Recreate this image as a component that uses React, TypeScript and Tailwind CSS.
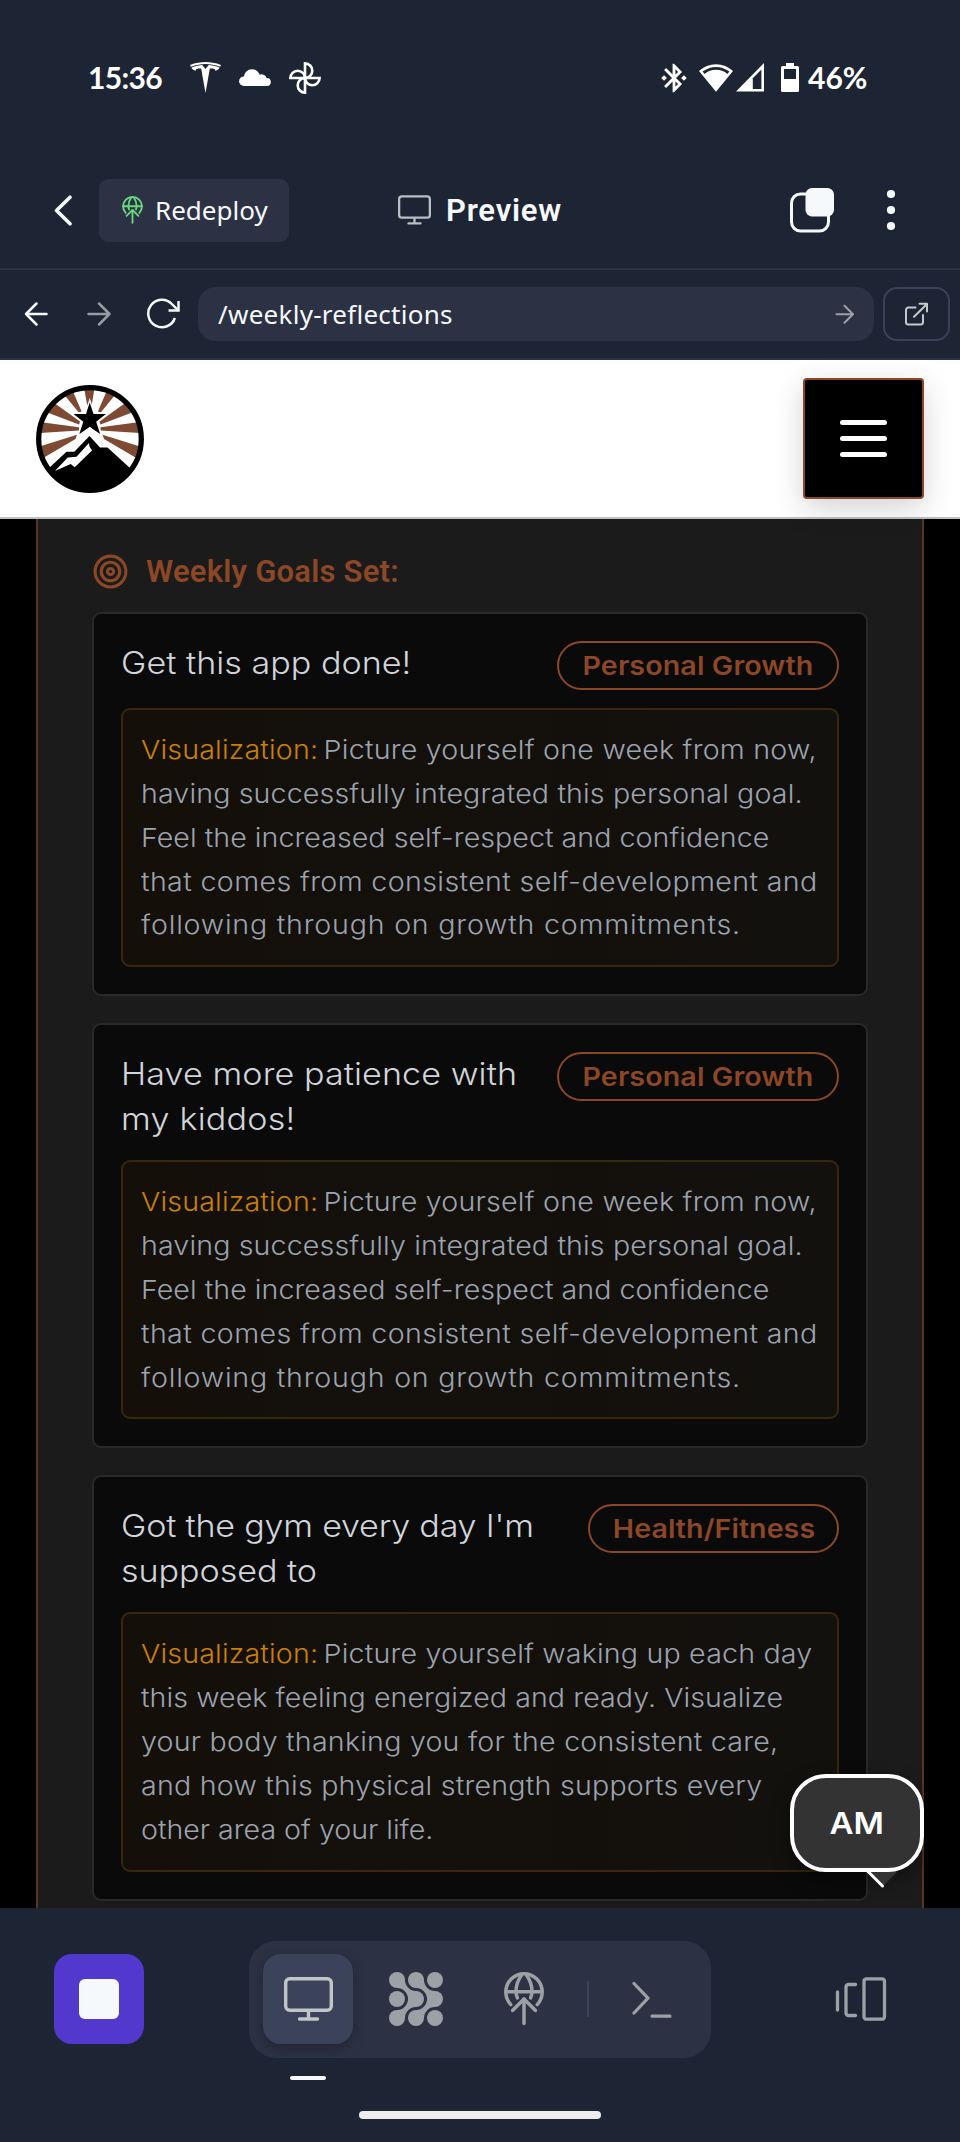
import React from "react";
import { Target } from "lucide-react";
import { SiTesla } from "react-icons/si";
import { MdBluetoothConnected } from "react-icons/md";

type Line = { text: string; tracking: string };
type Goal = {
  title: Line[];
  category: string;
  pill: string;
  lines: Line[];
};

const personalVision: Line[] = [
  { text: "Picture yourself one week from now,", tracking: "tracking-[0.2px]" },
  { text: "having successfully integrated this personal goal.", tracking: "tracking-[0.12px]" },
  { text: "Feel the increased self-respect and confidence", tracking: "tracking-[0.03px]" },
  { text: "that comes from consistent self-development and", tracking: "tracking-[0.33px]" },
  { text: "following through on growth commitments.", tracking: "tracking-[0.71px]" },
];

const goals: Goal[] = [
  {
    title: [{ text: "Get this app done!", tracking: "tracking-[0.02px]" }],
    category: "Personal Growth",
    pill: "w-[282px] tracking-[0.11px]",
    lines: personalVision,
  },
  {
    title: [
      { text: "Have more patience with", tracking: "tracking-[0.08px]" },
      { text: "my kiddos!", tracking: "tracking-[0.2px]" },
    ],
    category: "Personal Growth",
    pill: "w-[282px] tracking-[0.11px]",
    lines: personalVision,
  },
  {
    title: [
      { text: "Got the gym every day I'm", tracking: "tracking-[-0.2px]" },
      { text: "supposed to", tracking: "tracking-[-0.05px]" },
    ],
    category: "Health/Fitness",
    pill: "w-[251px] tracking-[0.05px]",
    lines: [
      { text: "Picture yourself waking up each day", tracking: "tracking-[0.16px]" },
      { text: "this week feeling energized and ready. Visualize", tracking: "tracking-[0.06px]" },
      { text: "your body thanking you for the consistent care,", tracking: "tracking-[0.2px]" },
      { text: "and how this physical strength supports every", tracking: "tracking-[0.2px]" },
      { text: "other area of your life.", tracking: "tracking-[-0.02px]" },
    ],
  },
];

const stroke = {
  fill: "none",
  stroke: "currentColor",
  strokeLinecap: "round" as const,
  strokeLinejoin: "round" as const,
};

function CloudIcon() {
  return (
    <svg width="32" height="17" viewBox="0 0 32 17" fill="currentColor">
      <circle cx="4.9" cy="12.2" r="4.8" />
      <circle cx="13" cy="8.5" r="8.3" />
      <circle cx="22.5" cy="10.5" r="5.3" />
      <circle cx="27.8" cy="13" r="4" />
      <path d="M5 9h18l5 4v4H5z" />
    </svg>
  );
}

function PinwheelIcon() {
  return (
    <svg width="32" height="32" viewBox="0 0 32 32" {...stroke} strokeWidth="2.6" strokeLinejoin="miter">
      <path d="M16 16V1.4A7.3 7.3 0 0 1 16 16" />
      <path d="M16 16H30.6A7.3 7.3 0 0 1 16 16" />
      <path d="M16 16V30.6A7.3 7.3 0 0 1 16 16" />
      <path d="M16 16H1.4A7.3 7.3 0 0 1 16 16" />
    </svg>
  );
}

function WifiIcon() {
  return (
    <svg width="34" height="29" viewBox="0 0 34 29">
      <path d="M0 8A24.5 24.5 0 0 1 34 8L17 28.7Z" fill="#fff" />
      <path d="M3.6 8.6A21.5 21.5 0 0 1 30.4 8.6L28.4 11A17.6 17.6 0 0 0 5.6 11Z" fill="#1d2433" />
    </svg>
  );
}

function SignalIcon() {
  return (
    <svg width="28" height="29" viewBox="0 0 28 29">
      <path d="M28 0V28.5H0Z" fill="#fff" />
      <path d="M16.8 15.2L25.4 6.5V26H16.8Z" fill="#1d2433" />
    </svg>
  );
}

function BatteryIcon() {
  return (
    <svg width="18" height="29" viewBox="0 0 18 29">
      <path d="M5 0h8v3h3.5a1.5 1.5 0 0 1 1.5 1.5V27.5a1.5 1.5 0 0 1-1.5 1.5h-15A1.5 1.5 0 0 1 0 27.5V4.5A1.5 1.5 0 0 1 1.5 3H5z" fill="#fff" />
      <path d="M3 6h12v10H3z" fill="#1d2433" />
    </svg>
  );
}

function DeployIcon({ className, strokeWidth }: { className: string; strokeWidth: number }) {
  return (
    <svg className={className} viewBox="0 0 40 54" {...stroke} strokeWidth={strokeWidth}>
      <path d="M6.8 32.6A18.2 18.2 0 1 1 33.2 32.6" />
      <path d="M2 19.8H38" />
      <path d="M17.5 3Q12 11 12 19.5Q12 23 13.4 26" />
      <path d="M22.5 3Q28 11 28 19.5Q28 23 26.6 26" />
      <path d="M8.5 38.5L20 27L31.5 38.5" />
      <path d="M20 27V51.5" />
    </svg>
  );
}

function MonitorIcon({ className }: { className: string }) {
  return (
    <svg className={className} viewBox="0 0 49 44" {...stroke} strokeWidth="3.4">
      <rect x="1.7" y="1.7" width="45.6" height="31.6" rx="4" />
      <path d="M24.5 34V41M15.5 42H33.5" />
    </svg>
  );
}

function DotsIcon() {
  return (
    <svg width="54" height="54" viewBox="-8 -8 54 54" fill="currentColor">
      {[0, 19, 38].map((y) => [0, 19, 38].map((x) => <circle key={`${x}-${y}`} cx={x} cy={y} r="8" />))}
      {[0, 19].map((x) => (
        <g key={x} transform={`translate(${x} 0)`}>
          <path d="M8 0A11 11 0 0 0 19 11L11 19A11 11 0 0 0 0 8Z" />
          <path d="M8 38A11 11 0 0 1 19 27L11 19A11 11 0 0 1 0 30Z" />
        </g>
      ))}
    </svg>
  );
}

function LogoIcon() {
  const rays = (
    <>
      <path d="M28 9.5L36.8 6L45.6 26.5L42.8 27.5Z" />
      <path d="M12 27.8L19 18.5L44 36.5L43 39.5Z" />
      <path d="M4 48L5.5 37.3L43 42.3V45.5Z" />
      <path d="M8 72.5L3.5 61.5L41 49.7L39.5 54Z" />
    </>
  );
  return (
    <svg width="108" height="108" viewBox="0 0 108 108">
      <circle cx="54" cy="54" r="51" fill="#fff" />
      <g fill="#7e4a33">
        <path d="M48 3H58.5L55.8 20H51.2Z" />
        {rays}
        <g transform="translate(107.5 0) scale(-1 1)">{rays}</g>
      </g>
      <path
        d="M53.7 17.5L57.5 29H70L60.2 36.8L64.2 49L53.7 42L43.3 49L47.3 36.8L37.5 29H50Z"
        fill="#000"
        stroke="#fff"
        strokeWidth="2.8"
        paintOrder="stroke"
      />
      <path d="M53.7 41.8L68 55L94 78L90 90H18L14 80Z" fill="#fff" />
      <path
        d="M53.5 51L64 62.5H71.5L95 84A50.8 50.8 0 0 1 12 84L30.5 66.7H38.3Z"
        fill="#000"
      />
      <path d="M53 58L53.5 61.5L56 65.5L38.7 82.3L34.7 79L19 86L31.7 72.5L40.5 71.7Z" fill="#fff" />
      <circle cx="54" cy="54" r="51.3" fill="none" stroke="#000" strokeWidth="5.3" />
    </svg>
  );
}

function StatusBar() {
  return (
    <div className="flex h-[153px] shrink-0 items-start justify-between pl-[88px] pr-[89px] pt-[60px] text-white">
      <div className="flex h-[35px] items-center">
        <span className="w-[102px] font-['Lato'] text-[30px] font-bold leading-[35px] tracking-[-0.7px]">15:36</span>
        <SiTesla className="h-[31px] w-[31px]" />
        <span className="ml-[18px]"><CloudIcon /></span>
        <span className="ml-[18px]"><PinwheelIcon /></span>
      </div>
      <div className="flex h-[35px] items-center">
        <MdBluetoothConnected className="mr-2 h-[34px] w-[34px]" />
        <WifiIcon />
        <span className="ml-[3px]"><SignalIcon /></span>
        <span className="ml-[17px]"><BatteryIcon /></span>
        <span className="ml-[9px] w-[63px] whitespace-nowrap font-['Lato'] text-[30px] font-bold leading-[35px]">46%</span>
      </div>
    </div>
  );
}

function TitleBar() {
  return (
    <div className="flex h-[117px] shrink-0 items-center border-b-2 border-[#2c3144] pb-[1px] text-[#f5f9fc]">
      <svg className="ml-[54px] h-[31px] w-[18px]" viewBox="0 0 18 31" {...stroke} strokeWidth="3.6">
        <path d="M16 2.2L2.5 15.5L16 28.8" />
      </svg>
      <button className="ml-[27px] flex h-[63px] w-[190px] items-center rounded-[9px] bg-[#2c3144] pl-[23px]">
        <DeployIcon className="h-[28px] w-[21px] text-[#69d77f]" strokeWidth={3.6} />
        <span className="ml-[12px] font-['Noto_Sans'] text-[26px] leading-[36px]">Redeploy</span>
      </button>
      <MonitorIcon className="ml-[109px] h-[30px] w-[33px] text-[#b9bfc4]" />
      <span className="ml-[15px] w-[130px] pt-[2px] font-['Roboto'] text-[31px] font-semibold leading-[36px] tracking-[0.8px]">Preview</span>
      <svg className="ml-[214px] h-[46px] w-[46px]" viewBox="0 0 46 46">
        <rect x="1.5" y="7" width="37" height="37" rx="9" {...stroke} strokeWidth="3" />
        <rect x="15.5" y="1" width="28.5" height="28.5" rx="6.5" fill="currentColor" />
      </svg>
      <svg className="ml-[50px] h-[42px] w-[10px]" viewBox="0 0 10 42" fill="currentColor">
        <circle cx="5" cy="5" r="4.1" />
        <circle cx="5" cy="21" r="4.1" />
        <circle cx="5" cy="37" r="4.1" />
      </svg>
    </div>
  );
}

function AddressBar() {
  return (
    <div className="flex h-[90px] shrink-0 items-center border-b-2 border-[#2c3144] pr-[10px] text-[#f5f9fc]">
      <svg className="ml-[24px] h-[26px] w-[24px]" viewBox="0 0 24 26" {...stroke} strokeWidth="2.5">
        <path d="M22.5 13H2M12.5 2.5L2 13L12.5 23.5" />
      </svg>
      <svg className="ml-[39px] h-[26px] w-[24px] text-[#979ca2]" viewBox="0 0 24 26" {...stroke} strokeWidth="2.5">
        <path d="M1.5 13H22.5M12 2.5L22.5 13L12 23.5" />
      </svg>
      <svg className="ml-[35px] h-[32px] w-[34px]" viewBox="0 0 34 32" {...stroke} strokeWidth="2.5" strokeLinecap="butt">
        <path d="M28.9 20A13.7 13.7 0 1 1 25.8 6L32 12.2" />
        <path d="M32.5 3V12.5H22.5" strokeLinejoin="miter" />
      </svg>
      <div className="ml-[18px] flex h-[54px] w-[676px] items-center justify-between rounded-[18px] bg-[#2c3144] pl-5 pr-5">
        <span className="font-['Noto_Sans'] text-[26px] leading-[36px] tracking-[0.27px]">/weekly-reflections</span>
        <svg className="h-[20px] w-[19px] text-[#9ca1a6]" viewBox="0 0 19 20" {...stroke} strokeWidth="2">
          <path d="M1.5 10.2H18M9.5 1.7L18 10.2L9.5 18.7" />
        </svg>
      </div>
      <button className="ml-[9px] flex h-[54px] w-[67px] items-center justify-center rounded-[14px] border-2 border-[#3a4159] pr-[2px]">
        <svg className="h-[24px] w-[24px] text-[#c4c9cc]" viewBox="0 0 24 24" {...stroke} strokeWidth="2">
          <path d="M11.5 5.5H4.5A2.5 2.5 0 0 0 2 8V20A2.5 2.5 0 0 0 4.5 22.5H16.5A2.5 2.5 0 0 0 19 20V13" />
          <path d="M10 14.7L23 2M15.5 1.7H23V9.5" />
        </svg>
      </button>
    </div>
  );
}

function SiteHeader() {
  return (
    <div className="z-10 flex h-[159px] shrink-0 items-start justify-between border-b-2 border-[#bfc1c0] bg-white px-[36px]">
      <div className="pt-[25px]"><LogoIcon /></div>
      <button className="mt-[18px] flex h-[121px] w-[121px] flex-col items-center justify-center gap-[10.5px] rounded-[4px] border-2 border-[#8b4726] bg-black shadow-[0_9px_30px_rgba(0,0,0,0.18)]">
        <span className="h-[5.5px] w-[47.5px] rounded-full bg-white" />
        <span className="h-[5.5px] w-[47.5px] rounded-full bg-white" />
        <span className="h-[5.5px] w-[47.5px] rounded-full bg-white" />
      </button>
    </div>
  );
}

function GoalCard({ goal }: { goal: Goal }) {
  return (
    <article className="rounded-[9px] border-2 border-[#292929] bg-[#0a0a0a] p-[27px]">
      <div className="flex items-start justify-between">
        <h3 className="-mt-px mb-px w-0 text-[31px] font-light leading-[45px] text-[#d1d5db]">
          {goal.title.map((l) => (
            <span key={l.text} className={`block w-max origin-left scale-x-110 whitespace-nowrap ${l.tracking}`}>{l.text}</span>
          ))}
        </h3>
        <span
          className={`flex h-[49px] shrink-0 items-center justify-center whitespace-nowrap rounded-full border-2 border-[#8b4726] text-[26px] font-semibold text-[#8b4726] ${goal.pill}`}
        >
          <span className="scale-x-110">{goal.category}</span>
        </span>
      </div>
      <div className="mt-[18px] rounded-[9px] border-2 border-[#38270d] bg-linear-to-r from-[#140f09] to-[#13110e] p-[18px]">
        <p className="text-[26px] font-light leading-[43.85px] text-[#9ca3af]">
          {goal.lines.map((l, i) => (
            <span key={l.text} className="flex w-max origin-left scale-x-110 whitespace-nowrap">
              {i === 0 && <span className="w-[166px] tracking-[0.15px] text-[#ca8100]">Visualization: </span>}
              <span className={l.tracking}>{l.text}</span>
            </span>
          ))}
        </p>
      </div>
    </article>
  );
}

function BottomBar() {
  return (
    <nav className="flex h-[234px] shrink-0 flex-col items-center bg-[#1d2433] pt-[33px]">
      <div className="flex h-[117px] w-full items-start pl-[54px] pr-[72px]">
        <button className="mt-[13px] flex h-[90px] w-[90px] items-center justify-center rounded-[18px] bg-[#5238cc]">
          <span className="h-[40px] w-[40px] rounded-[6px] bg-[#f5f9fc]" />
        </button>
        <div className="ml-[105px] flex h-[117px] w-[462px] items-start rounded-[27px] bg-[#2c3144] pl-[14px] pt-[13px] text-[#9ca1a6]">
          <div className="flex h-[90px] w-[90px] items-center justify-center rounded-[18px] bg-[#3b435a] shadow-[0_4px_14px_rgba(0,0,0,0.25)]">
            <MonitorIcon className="h-[44px] w-[49px] text-[#c0c5c8]" />
          </div>
          <div className="flex h-[90px] items-center">
            <span className="ml-9"><DotsIcon /></span>
            <DeployIcon className="ml-[61px] h-[54px] w-[40px]" strokeWidth={3.5} />
            <span className="ml-[43px] h-[36px] w-[2px] bg-[#3b435a]" />
            <svg className="ml-[43px] h-[38px] w-[41px]" viewBox="0 0 41 38" {...stroke} strokeWidth="3.2">
              <path d="M2 3.5L16 18.2L2 33M20 36.2H38" />
            </svg>
          </div>
        </div>
        <svg className="ml-[124px] mt-[36px] h-[44px] w-[52px] text-[#9ca1a6]" viewBox="0 0 52 44" {...stroke} strokeWidth="3.3">
          <rect x="29" y="1.8" width="20.5" height="40.4" rx="2.5" />
          <path d="M20.5 7.5H13.5A2.5 2.5 0 0 0 11 10V36A2.5 2.5 0 0 0 13.5 38.5H20.5" />
          <path d="M2.5 15V33" />
        </svg>
      </div>
      <div className="mt-[18px] flex w-full pl-[290px]">
        <span className="h-[4px] w-[36px] rounded-full bg-[#f5f9fc]" />
      </div>
      <div className="mt-[31px] h-[8px] w-[242px] rounded-full bg-[#ededee]" />
    </nav>
  );
}

export default function App() {
  return (
    <div className="flex h-[2142px] w-[960px] flex-col overflow-hidden bg-[#1d2433] font-['Inter',sans-serif]">
      <StatusBar />
      <TitleBar />
      <AddressBar />
      <SiteHeader />
      <main className="relative h-[1389px] shrink-0 overflow-hidden bg-black px-[36px]">
        <section className="h-[1500px] border-x-2 border-[#5a3422] bg-[#1b1b1b] px-[54px]">
          <h2 className="flex h-[93px] items-center pt-[11px] font-['Roboto'] text-[31px] font-semibold tracking-[0.22px] text-[#8b4726]">
            <Target size={37} strokeWidth={2} />
            <span className="ml-[17px] pt-[2px]">Weekly Goals Set:</span>
          </h2>
          <div className="flex flex-col gap-[27px]">
            {goals.map((goal) => (
              <GoalCard key={goal.title[0].text} goal={goal} />
            ))}
          </div>
        </section>
        <div className="absolute right-[36px] top-[1255px] flex h-[98px] w-[134px] items-center justify-center rounded-[36px] border-4 border-white bg-[#333] pt-px text-[30px] font-semibold text-white shadow-[0_8px_20px_rgba(0,0,0,0.4)]">
          <span className="scale-x-110">AM</span>
          <svg className="absolute left-[72px] top-[93px] h-[18px] w-[34px]" viewBox="0 0 34 18">
            <path d="M2 1H31L17 15Z" fill="#333" />
            <path d="M2 0.5L16.5 15" fill="none" stroke="#fff" strokeWidth="3" strokeLinecap="round" />
          </svg>
        </div>
      </main>
      <BottomBar />
    </div>
  );
}
